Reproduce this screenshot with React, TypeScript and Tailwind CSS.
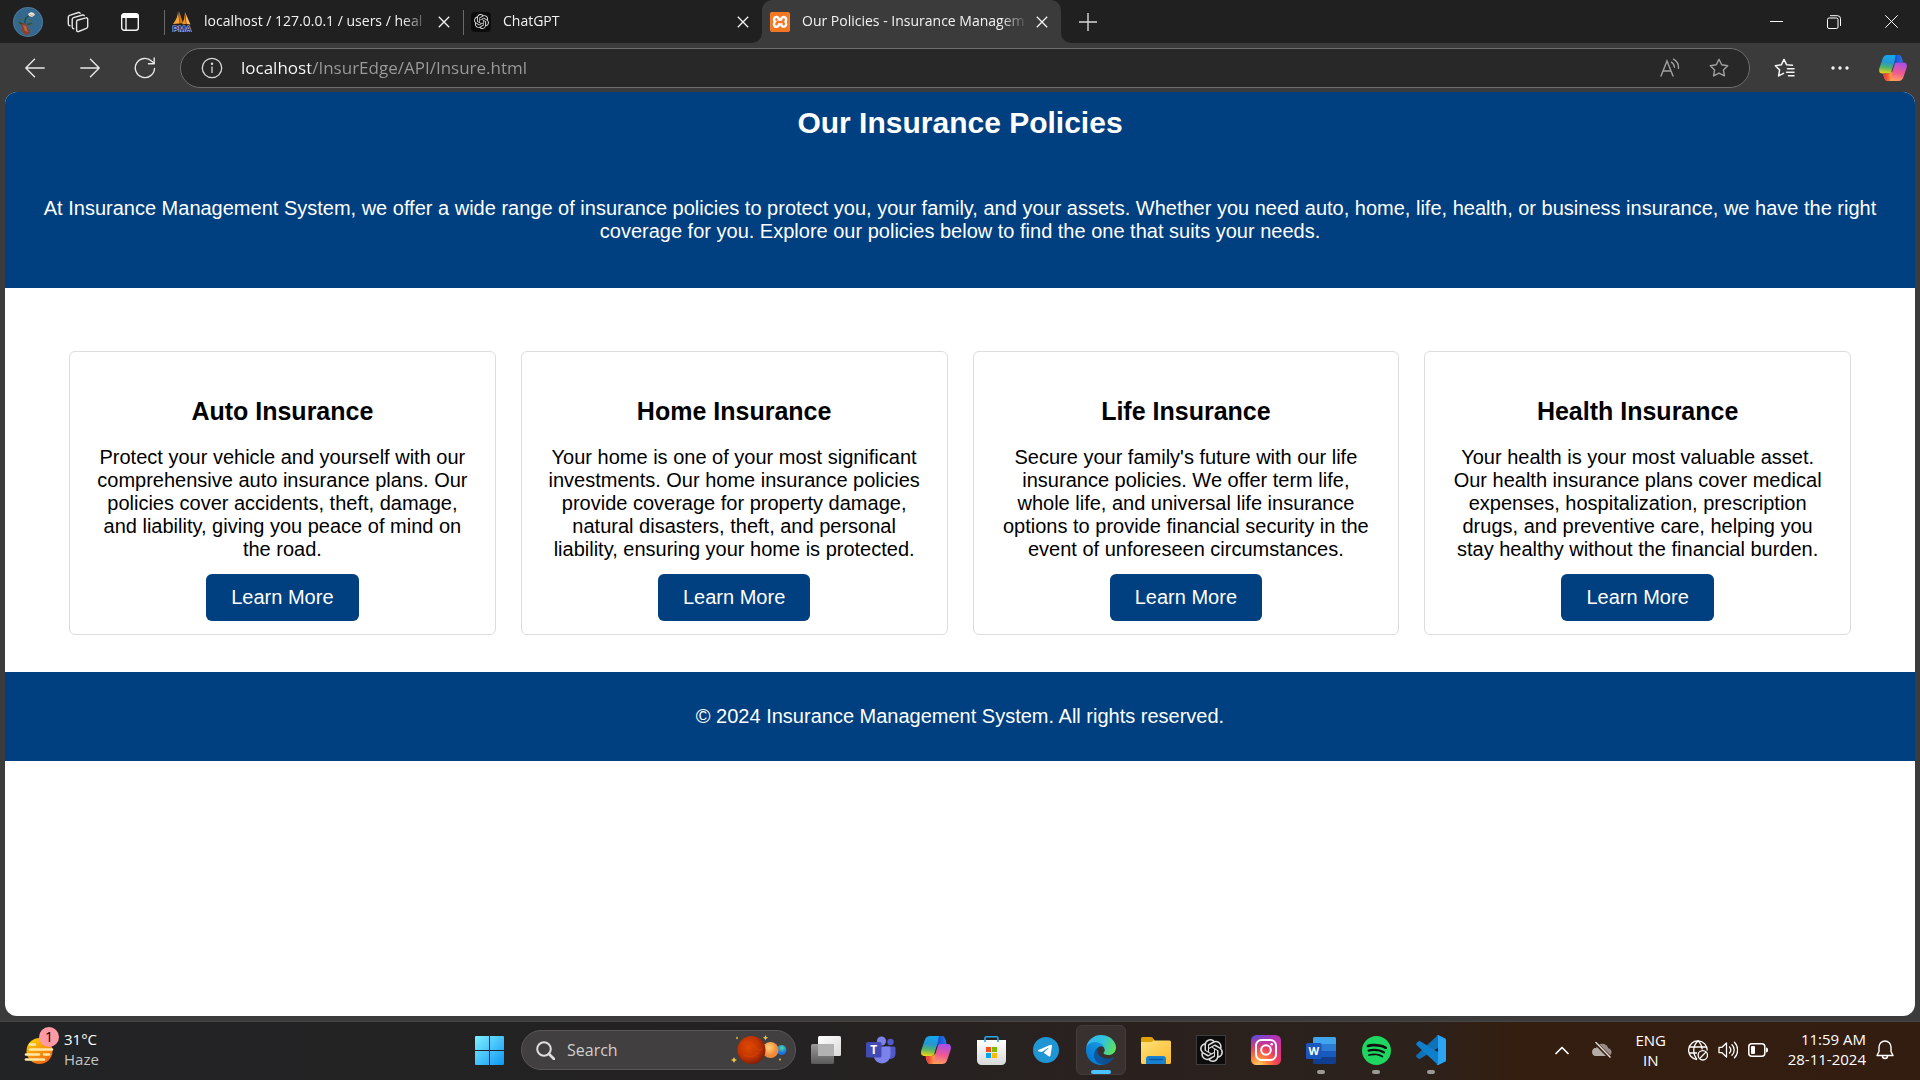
import { useId } from "react";
import type { ReactNode } from "react";
import { SiOpenai, SiSpotify, SiTelegram, SiXampp } from "react-icons/si";

const policies = [
  {
    title: "Auto Insurance",
    text: "Protect your vehicle and yourself with our comprehensive auto insurance plans. Our policies cover accidents, theft, damage, and liability, giving you peace of mind on the road.",
  },
  {
    title: "Home Insurance",
    text: "Your home is one of your most significant investments. Our home insurance policies provide coverage for property damage, natural disasters, theft, and personal liability, ensuring your home is protected.",
  },
  {
    title: "Life Insurance",
    text: "Secure your family's future with our life insurance policies. We offer term life, whole life, and universal life insurance options to provide financial security in the event of unforeseen circumstances.",
  },
  {
    title: "Health Insurance",
    text: "Your health is your most valuable asset. Our health insurance plans cover medical expenses, hospitalization, prescription drugs, and preventive care, helping you stay healthy without the financial burden.",
  },
];

function ProfileIcon() {
  return (
    <svg width="30" height="30" viewBox="0 0 30 30">
      <defs>
        <clipPath id="avatar"><circle cx="15" cy="15" r="15" /></clipPath>
      </defs>
      <g clipPath="url(#avatar)">
        <rect width="30" height="30" fill="#33688f" />
        <path d="M12 17C11 13 13 9 18 8M6 15c2 2 4 3 6 2M14 17c2 0 4 1 5-1" stroke="#27472d" strokeWidth="1.200" fill="none" />
        <path d="M4 15l3 1-2 2zM7 11l3 1-2 2zM16 13l3-1-1 3zM16 18l4-2-1 3z" fill="#4a6a3a" />
        <path d="M15 7l3-2 3 1 1 2-3 2-3-1z" fill="#e8ded2" />
        <path d="M16 7l3 1 2-1-2 2z" fill="#b9a08c" />
        <path d="M9 17l3-1 3 4 2 6-4 3-4-5z" fill="#8a4128" />
        <path d="M10 18l3 1 2 6-3-1z" fill="#b4684a" />
      </g>
      <circle cx="15" cy="15" r="14.500" fill="none" stroke="#6b8aa0" strokeOpacity=".5" />
    </svg>
  );
}

function WorkspacesIcon() {
  return (
    <svg width="22" height="22" viewBox="0 0 22 22" fill="none" stroke="#e6e6e6" strokeWidth="1.400" strokeLinejoin="round" strokeLinecap="round">
      <path d="M10.300 9.200l8.600-2.300c1-.3 1.800.3 1.800 1.300v7.300c0 .9-.5 1.500-1.300 1.800l-7.800 3.200c-1.100.4-2-.2-2-1.300v-8.300c0-.9.200-1.400.700-1.700z" />
      <path d="M6.800 17.700c-1 0-1.600-.6-1.600-1.600V8.600c0-.9.500-1.600 1.300-1.900l9-2.700c.8-.2 1.400 0 1.700.6" />
      <path d="M3 14.700c-1-.1-1.700-.7-1.700-1.700V6.100c0-.9.500-1.500 1.300-1.800l8.800-2.800c.8-.2 1.400.1 1.700.8" />
    </svg>
  );
}

function TabActionsIcon() {
  return (
    <svg width="20" height="20" viewBox="0 0 20 20" fill="none">
      <rect x="1.700" y="1.700" width="16.600" height="16.600" rx="2.500" stroke="#f2f2f2" strokeWidth="1.400" />
      <path d="M1.500 6V4a2.500 2.500 0 0 1 2.500-2.500h12A2.500 2.500 0 0 1 18.500 4v2z" fill="#fff" />
      <path d="M6 6v12" stroke="#f2f2f2" strokeWidth="1.400" />
    </svg>
  );
}

function PmaIcon() {
  return (
    <svg width="20" height="21" viewBox="0 0 20 21">
      <path d="M6 0l1.500 12.500L1 13C4 9 6 5 6 0z" fill="#f7a53a" />
      <path d="M7 0l4 12-3.500.5z" fill="#d97a10" />
      <path d="M12.500 1l1.500 12-4 .3C12 9 13 6 12.500 1z" fill="#f7931a" />
      <path d="M13 1l5.500 12.500-4-.5z" fill="#fbb75a" />
      <text x="10" y="20.500" textAnchor="middle" fontFamily="Liberation Sans, sans-serif" fontWeight="700" fontSize="8.500" fill="#2b2f7c" stroke="#b8b8dc" strokeWidth="1.200" paintOrder="stroke">PMA</text>
    </svg>
  );
}

function CloseIcon() {
  return (
    <svg width="12" height="12" viewBox="0 0 12 12" stroke="#f5f5f5" strokeWidth="1.300">
      <path d="M.8.8l10.400 10.400M11.200.8L.8 11.200" />
    </svg>
  );
}

function Arrow({ flip = false }: { flip?: boolean }) {
  return (
    <svg width="20" height="20" viewBox="0 0 20 20" fill="none" stroke="#e8e8e8" strokeWidth="1.400" strokeLinecap="round" strokeLinejoin="round">
      {flip ? <path d="M.8 10h18.400M10.500 1.300L19.200 10l-8.700 8.700" /> : <path d="M19.200 10H.8M9.500 1.300L.8 10l8.700 8.700" />}
    </svg>
  );
}

function ReloadIcon() {
  return (
    <svg width="22" height="22" viewBox="0 0 22 22" fill="none" stroke="#e8e8e8" strokeWidth="1.400" strokeLinecap="round" strokeLinejoin="round">
      <path d="M20.500 11.500a9.600 9.600 0 1 1-2.700-7.200L20 6.300" />
      <path d="M20.200 1v5.700h-5.700" />
    </svg>
  );
}

const star = "M10 1.300l2.700 5.500 6 .9-4.300 4.200 1 6L10 15.100l-5.400 2.800 1-6L1.300 7.700l6-.9z";

function CopilotIcon({ width }: { width: number }) {
  const id = useId();
  const left = "M9 0H20.500C23 0 24 2 25 5.500L25.300 7H20.500C17.500 7 16.400 8 15.500 10.800L13 18.500C12.500 20 11.500 20 9 20H3.500C0 20-.5 17 .4 14L3.800 4C4.900 1 6.500 0 9 0Z";
  return (
    <svg width={width} height={Math.round((width * 28) / 30)} viewBox="0 0 30 28">
      <defs>
        <linearGradient id={id + "a"} x1=".4" y1="0" x2=".25" y2="1">
          <stop offset="0" stopColor="#12a8ee" /><stop offset=".4" stopColor="#2597d0" /><stop offset=".68" stopColor="#55b36b" /><stop offset="1" stopColor="#f3d612" />
        </linearGradient>
        <linearGradient id={id + "b"} x1=".4" y1="1" x2=".65" y2="0">
          <stop offset="0" stopColor="#a94fe8" /><stop offset=".5" stopColor="#ee5791" /><stop offset="1" stopColor="#ffa35b" />
        </linearGradient>
        <linearGradient id={id + "c"}><stop offset="0" stopColor="#1b48c8" /><stop offset="1" stopColor="#2575f0" /></linearGradient>
        <linearGradient id={id + "d"}><stop offset="0" stopColor="#ffb03c" /><stop offset=".7" stopColor="#f0463c" /></linearGradient>
      </defs>
      <path d={left} fill={`url(#${id}a)`} />
      <path d="M18 0h2.500C23 0 24 2 25 5.500l.4 2.500H20.500C17.500 8 16.500 9 15.700 11L17 4.500C17.500 2 17.500 1 18 0Z" fill={`url(#${id}c)`} />
      <g transform="rotate(180 15 14)">
        <path d={left} fill={`url(#${id}b)`} />
        <path d="M18 0h2.500C23 0 24 2 25 5.500l.4 2.500H20.500C17.500 8 16.500 9 15.700 11L17 4.500C17.500 2 17.500 1 18 0Z" fill={`url(#${id}d)`} />
      </g>
    </svg>
  );
}

function TitleTab({ icon, title, divider }: { icon: ReactNode; title: string; divider: boolean }) {
  return (
    <div className="relative flex h-full w-[299px] items-center">
      {divider && <span className="absolute left-0 top-[10px] h-[25px] w-px bg-[#6a6a6a]" />}
      <button className="flex min-w-0 flex-1 items-center gap-3 pl-2 text-left">
        <span className="flex w-5 shrink-0 justify-center">{icon}</span>
        <span className="flex-1 whitespace-nowrap pb-0.5 [mask-image:linear-gradient(90deg,#000_88%,transparent)]">{title}</span>
      </button>
      <button aria-label={`Close ${title}`} className="mr-[13px] ml-2 flex w-3 justify-center"><CloseIcon /></button>
    </div>
  );
}

function GptBadge({ size }: { size: "sm" | "lg" }) {
  return size === "sm" ? (
    <span className="flex size-5 items-center justify-center rounded bg-[#0c0c0c] text-[#d5d5d5]"><SiOpenai size={15} /></span>
  ) : (
    <span className="flex size-[30px] items-center justify-center border border-[#3c3c3c] bg-[#0c0c0c] text-[#dedede]"><SiOpenai size={23} /></span>
  );
}

function BrowserTop() {
  return (
    <header className="text-sm leading-6 text-[#f2f2f2]">
      <div className="flex h-[43px] items-center bg-[#202020]">
        <button aria-label="Profile" className="ml-[13px]"><ProfileIcon /></button>
        <button aria-label="Workspaces" className="ml-6"><WorkspacesIcon /></button>
        <button aria-label="Tab actions" className="ml-[31px]"><TabActionsIcon /></button>
        <nav aria-label="Open tabs" className="ml-6 flex h-full">
          <TitleTab icon={<PmaIcon />} title="localhost / 127.0.0.1 / users / heal" divider />
          <TitleTab icon={<GptBadge size="sm" />} title="ChatGPT" divider />
          <div className="relative h-full rounded-t-[10px] bg-[#3b3b3b]">
            <span className="absolute bottom-0 -left-[10px] size-[10px] overflow-hidden bg-[#3b3b3b]"><span className="block size-full rounded-br-[10px] bg-[#202020]" /></span>
            <span className="absolute -right-[10px] bottom-0 size-[10px] overflow-hidden bg-[#3b3b3b]"><span className="block size-full rounded-bl-[10px] bg-[#202020]" /></span>
            <TitleTab
              icon={<span className="flex rounded-sm bg-white text-[#f37623]"><SiXampp size={20} /></span>}
              title="Our Policies - Insurance Managem"
              divider={false}
            />
          </div>
        </nav>
        <button aria-label="New tab" className="ml-[18px]">
          <svg width="18" height="18" viewBox="0 0 18 18" stroke="#d8d8d8" strokeWidth="1.400"><path d="M9 0v18M0 9h18" /></svg>
        </button>
        <div className="mr-[22px] ml-auto flex items-center gap-11">
          <button aria-label="Minimize"><svg width="13" height="13" viewBox="0 0 13 13" stroke="#fff"><path d="M0 6.500h13" /></svg></button>
          <button aria-label="Restore">
            <svg width="14" height="14" viewBox="0 0 14 14" fill="none" stroke="#fff"><rect x=".5" y="3" width="10.500" height="10.500" rx="1.500" /><path d="M3 .7h7.500a3 3 0 0 1 3 3V11" /></svg>
          </button>
          <button aria-label="Close window"><svg width="13" height="13" viewBox="0 0 13 13" stroke="#fff"><path d="M.3.3l12.400 12.400M12.700.3L.3 12.700" /></svg></button>
        </div>
      </div>
      <div className="flex h-[49px] items-center bg-[#3b3b3b] pr-[13px] pl-[25px]">
        <button aria-label="Back"><Arrow /></button>
        <button aria-label="Forward" className="ml-[35px]"><Arrow flip /></button>
        <button aria-label="Reload" className="ml-[34px]"><ReloadIcon /></button>
        <div className="ml-6 flex h-10 flex-1 items-center rounded-full border border-[#6e6e6e] bg-[#282828] px-5">
          <button aria-label="Site information">
            <svg width="22" height="22" viewBox="0 0 22 22" fill="none" stroke="#d8d8d8" strokeWidth="1.300"><circle cx="11" cy="11" r="9.700" /><path d="M11 9.500v6.500" /><circle cx="11" cy="6.800" r=".6" fill="#d8d8d8" /></svg>
          </button>
          <input
            aria-label="Address"
            defaultValue="localhost/InsurEdge/API/Insure.html"
            className="ml-[18px] min-w-0 flex-1 bg-[linear-gradient(90deg,#fff_0_69px,#9b9b9b_69px)] bg-clip-text text-[17px] text-transparent outline-none"
          />
          <button aria-label="Read aloud">
            <svg width="20" height="20" viewBox="0 0 20 20" fill="none" stroke="#a0a0a0" strokeWidth="1.400" strokeLinecap="round"><path d="M1 18L7 3l6 15M3 13h8M11.500 4.200a7 7 0 0 1 3 5M13.500 1.200a10 10 0 0 1 5 9" /></svg>
          </button>
          <button aria-label="Add to favorites" className="ml-[29px]">
            <svg width="20" height="20" viewBox="0 0 20 20" fill="none" stroke="#a0a0a0" strokeWidth="1.400" strokeLinejoin="round"><path d={star} /></svg>
          </button>
        </div>
        <button aria-label="Favorites" className="ml-6">
          <svg width="21" height="20" viewBox="0 0 21 20" fill="none" stroke="#f4f4f4" strokeWidth="1.500" strokeLinejoin="round" strokeLinecap="round"><path d="M18.500 7.200l-5.800-.4L10 1.300 7.300 6.800l-6 .9 4.300 4.200-1 6 4.900-2.500" /><path d="M13.500 10.700h6.500M12.500 14.200h7.500M14.500 17.700h5.500" /></svg>
        </button>
        <button aria-label="Settings and more" className="ml-9">
          <svg width="18" height="4" viewBox="0 0 18 4" fill="#f4f4f4"><circle cx="2" cy="2" r="1.700" /><circle cx="9" cy="2" r="1.700" /><circle cx="16" cy="2" r="1.700" /></svg>
        </button>
        <button aria-label="Copilot" className="ml-[30px]"><CopilotIcon width={28} /></button>
      </div>
    </header>
  );
}

function InsurancePage() {
  return (
    <main className="mx-[5px] mb-[5px] flex-1 overflow-hidden rounded-xl bg-white font-['Liberation_Sans',Arial,sans-serif] text-xl leading-[23px] text-black">
      <section className="bg-[#004080] px-9 pt-[13px] pb-[45px] text-center text-white">
        <h1 className="text-[30px] leading-[35px] font-bold">Our Insurance Policies</h1>
        <p className="mt-[57px]">
          At Insurance Management System, we offer a wide range of insurance policies to protect you, your family, and your assets. Whether you need auto, home, life, health, or business insurance, we have the right coverage for you. Explore our policies below to find the one that suits your needs.
        </p>
      </section>
      <section className="grid grid-cols-4 gap-[25px] px-16 pt-[63px] pb-[37px]">
        {policies.map((p) => (
          <article key={p.title} className="flex flex-col items-center rounded-md border border-[#dddddd] px-6 pt-[45px] pb-[13px] text-center">
            <h2 className="text-[25px] leading-[29px] font-bold">{p.title}</h2>
            <p className="mt-5">{p.text}</p>
            <a href="#" className="mt-[13px] rounded-md bg-[#004080] px-[25px] py-3 text-white">Learn More</a>
          </article>
        ))}
      </section>
      <footer className="bg-[#004080] py-[33px] text-center text-white">© 2024 Insurance Management System. All rights reserved.</footer>
    </main>
  );
}

function WeatherIcon() {
  return (
    <svg width="30" height="30" viewBox="0 0 30 30">
      <defs><linearGradient id="sun" x1="0" y1="0" x2=".6" y2="1"><stop offset="0" stopColor="#ffd500" /><stop offset="1" stopColor="#f06a10" /></linearGradient></defs>
      <circle cx="15.500" cy="16" r="13" fill="url(#sun)" />
      <g stroke="#ffe9a8" strokeWidth="2.600" strokeLinecap="round">
        <path d="M6 9.500h5M6 14.500h22" /><path d="M2 19.500h13M20 19.500h5" /><path d="M2 24.500h18" />
      </g>
    </svg>
  );
}

function StartIcon() {
  return (
    <svg width="29" height="29" viewBox="0 0 29 29">
      <defs><linearGradient id="win" gradientUnits="userSpaceOnUse" x1="0" y1="0" x2="29" y2="29"><stop offset="0" stopColor="#7df0ff" /><stop offset="1" stopColor="#0f96f5" /></linearGradient></defs>
      <path d="M1 0h13v14H0V1a1 1 0 0 1 1-1zM15 0h13a1 1 0 0 1 1 1v13H15zM0 15h14v14H1a1 1 0 0 1-1-1zM15 15h14v13a1 1 0 0 1-1 1H15z" fill="url(#win)" />
    </svg>
  );
}

function PlanetsIcon() {
  return (
    <svg width="56" height="30" viewBox="0 0 56 30">
      <defs>
        <radialGradient id="mars" cx=".4" cy=".4" r=".65"><stop offset="0" stopColor="#e04800" /><stop offset=".6" stopColor="#c03402" /><stop offset="1" stopColor="#7c1b08" /></radialGradient>
        <radialGradient id="venus" cx=".4" cy=".35"><stop offset="0" stopColor="#ffd27a" /><stop offset="1" stopColor="#f08a38" /></radialGradient>
        <radialGradient id="earth" cx=".55" cy=".3"><stop offset="0" stopColor="#4be0a0" /><stop offset="1" stopColor="#1a70e0" /></radialGradient>
      </defs>
      <circle cx="50.500" cy="15" r="5" fill="url(#earth)" />
      <circle cx="39.500" cy="15" r="8" fill="url(#venus)" />
      <circle cx="20.500" cy="15" r="14" fill="url(#mars)" />
      <path d="M10 10q8-6 13 1t9 2M13 20q8 4 15-3" stroke="#e8500a" strokeOpacity=".3" fill="none" strokeWidth="1.500" />
      <g fill="#f2c545"><path d="M3 22l1 2 2 1-2 1-1 2-1-2-2-1 2-1zM34.500 0l.8 2 2 .8-2 .8-.8 2-.8-2-2-.8 2-.8z" /><path d="M6 1.500l1 1.500-1 1.500L5 3zM49 23l1 1.500-1 1.500-1-1.500z" /></g>
    </svg>
  );
}

function TaskViewIcon() {
  return (
    <svg width="30" height="28" viewBox="0 0 30 28">
      <defs>
        <linearGradient id="tv1" x2=".8" y2="1"><stop offset="0" stopColor="#fff" /><stop offset="1" stopColor="#dcdcdc" /></linearGradient>
        <linearGradient id="tv2" y2="1" x2="0"><stop offset="0" stopColor="#9a9a9a" /><stop offset="1" stopColor="#5a5a5a" /></linearGradient>
      </defs>
      <rect x="0" y="8" width="23" height="20" rx="1.500" fill="url(#tv2)" />
      <rect x="7" y="0" width="23" height="20" rx="1.500" fill="url(#tv1)" />
      <path d="M7 8h16v12H8.500A1.500 1.500 0 0 1 7 18.500z" fill="#b2b2b2" />
    </svg>
  );
}

function TeamsIcon() {
  return (
    <svg width="30" height="28" viewBox="0 0 30 28">
      <circle cx="24.500" cy="6" r="3.200" fill="#5059c9" />
      <path d="M19 10.500h9a1.500 1.500 0 0 1 1.500 1.500v6a5 5 0 0 1-10 0z" fill="#5059c9" />
      <circle cx="15.500" cy="5" r="4.600" fill="#7b83eb" />
      <path d="M9 10.500h14a1.500 1.500 0 0 1 1.500 1.500v7a8.500 8.500 0 0 1-17 0v-7A1.500 1.500 0 0 1 9 10.500z" fill="#7b83eb" />
      <rect x="0" y="6" width="15.500" height="15.500" rx="1.500" fill="#444ab4" />
      <text x="7.700" y="18" textAnchor="middle" fontFamily="Open Sans, sans-serif" fontWeight="700" fontSize="12" fill="#fff">T</text>
    </svg>
  );
}

function StoreIcon() {
  return (
    <svg width="29" height="29" viewBox="0 0 29 29">
      <defs><linearGradient id="bag" x2="0" y2="1"><stop offset="0" stopColor="#fff" /><stop offset="1" stopColor="#d9d9d9" /></linearGradient></defs>
      <path d="M0 4h29v20.500a4.500 4.500 0 0 1-4.500 4.500h-20A4.500 4.500 0 0 1 0 24.500z" fill="url(#bag)" />
      <path d="M8 6V2.200C8 1.300 8.600.8 9.400.8h10.200c.8 0 1.400.5 1.400 1.400V6" fill="none" stroke="#28a8ea" strokeWidth="1.600" />
      <path d="M9 11h5v5H9z" fill="#f25022" /><path d="M15 11h5v5h-5z" fill="#7fba00" /><path d="M9 17h5v5H9z" fill="#00a4ef" /><path d="M15 17h5v5h-5z" fill="#ffb900" />
    </svg>
  );
}

function EdgeIcon() {
  return (
    <svg width="30" height="30" viewBox="0 0 256 256">
      <defs>
        <linearGradient id="e1" x1="0" x2="1"><stop offset="0" stopColor="#0c59a4" /><stop offset="1" stopColor="#114a8b" /></linearGradient>
        <linearGradient id="e2" x1=".8" y1="0" x2=".2" y2="1"><stop offset="0" stopColor="#1b9de2" /><stop offset=".5" stopColor="#0b86da" /><stop offset="1" stopColor="#0078d4" /></linearGradient>
        <linearGradient id="e3" x1="0" y1=".3" x2="1" y2=".6"><stop offset="0" stopColor="#35b4f1" /><stop offset=".5" stopColor="#2fc2df" /><stop offset="1" stopColor="#5fe05a" /></linearGradient>
      </defs>
      <path fill="url(#e1)" d="M231 190.500c-3.400 1.800-6.900 3.400-10.500 4.700a101.200 101.200 0 0 1-35.900 6.500c-47.300 0-88.500-32.500-88.500-74.300.1-11.400 6.400-21.900 16.400-27.300-42.800 1.800-53.800 46.400-53.800 72.500 0 73.900 68.100 81.400 82.800 81.400 7.900 0 19.800-2.300 27-4.600l1.300-.4a128.300 128.300 0 0 0 66.600-52.800 4 4 0 0 0-5.400-5.700z" />
      <path fill="url(#e2)" d="M105.700 241.500a79.200 79.200 0 0 1-22.700-21.300 80.700 80.700 0 0 1 29.500-120c3.200-1.500 8.500-4.100 15.600-4a32.400 32.400 0 0 1 25.700 13 31.900 31.900 0 0 1 6.300 18.700c0-.2 24.500-79.600-80-79.600-43.900 0-80 41.700-80 78.200a130.200 130.200 0 0 0 12.100 56 128 128 0 0 0 156.400 67.100 75.500 75.500 0 0 1-62.900-8.100z" />
      <path fill="url(#e3)" d="M152.300 148.900c-.8 1-3.300 2.500-3.300 5.700 0 2.600 1.700 5.200 4.800 7.300 14.400 10.100 41.700 8.700 41.800 8.700a59.800 59.800 0 0 0 30.300-8.400 61.400 61.400 0 0 0 30.400-52.900c.3-22.400-8-37.300-11.300-43.900C223.500 23.900 177.700 0 128 0A128 128 0 0 0 0 126.200c.5-36.500 36.800-66 80-66 3.500 0 23.500.3 42 10.100 16.300 8.600 24.900 19 30.800 29.300 6.200 10.700 7.300 24.100 7.300 29.500s-2.700 13.300-7.800 19.800z" />
    </svg>
  );
}

function ExplorerIcon() {
  return (
    <svg width="30" height="27" viewBox="0 0 30 27">
      <defs><linearGradient id="fold" x2="1" y2="1"><stop offset="0" stopColor="#ffe27a" /><stop offset="1" stopColor="#fcb92c" /></linearGradient></defs>
      <path d="M0 1.500A1.500 1.500 0 0 1 1.500 0h8.300c1 0 1.700.4 2.300 1.200L14 4v6H0z" fill="#e0a008" />
      <path d="M0 5h10.500l2-1.500H28.500A1.500 1.500 0 0 1 30 5v20.500a1.500 1.500 0 0 1-1.500 1.500h-27A1.500 1.500 0 0 1 0 25.500z" fill="url(#fold)" />
      <path d="M5 27v-5a3 3 0 0 1 3-3h14a3 3 0 0 1 3 3v5z" fill="#1a80d0" />
      <path d="M9 22.500h12" stroke="#0c5aa6" strokeWidth="1.600" strokeLinecap="round" />
    </svg>
  );
}

function InstagramIcon() {
  return (
    <svg width="30" height="30" viewBox="0 0 30 30">
      <defs>
        <linearGradient id="ig1" x1=".1" y1="0" x2=".9" y2="1"><stop offset="0" stopColor="#5a4fd8" /><stop offset=".4" stopColor="#b931b3" /><stop offset="1" stopColor="#e8336b" /></linearGradient>
        <radialGradient id="ig2" cx=".25" cy="1.050" r="1"><stop offset="0" stopColor="#ffdc6a" /><stop offset=".3" stopColor="#fd8a3c" /><stop offset=".65" stopColor="#f2434f" stopOpacity=".8" /><stop offset="1" stopColor="#d0309a" stopOpacity="0" /></radialGradient>
      </defs>
      <rect width="30" height="30" rx="5.500" fill="url(#ig1)" /><rect width="30" height="30" rx="5.500" fill="url(#ig2)" />
      <g fill="none" stroke="#fff" strokeWidth="2"><rect x="5" y="5" width="20" height="20" rx="5.500" /><circle cx="15" cy="15" r="4.800" /></g>
      <circle cx="20.700" cy="9.300" r="1.300" fill="#fff" />
    </svg>
  );
}

function WordIcon() {
  return (
    <svg width="30" height="27" viewBox="0 0 30 27">
      <path d="M7 1.500A1.500 1.500 0 0 1 8.500 0h20A1.500 1.500 0 0 1 30 1.500V7H7z" fill="#41a5ee" />
      <path d="M7 7h23v7H7z" fill="#2b7cd3" /><path d="M7 14h23v6.500H7z" fill="#185abd" />
      <path d="M7 20.500h23v5a1.500 1.500 0 0 1-1.500 1.500h-20A1.500 1.500 0 0 1 7 25.500z" fill="#103f91" />
      <rect x="0" y="6" width="15.500" height="16" rx="1.500" fill="#1a56bd" />
      <text x="7.700" y="18" textAnchor="middle" fontFamily="Open Sans, sans-serif" fontWeight="700" fontSize="11" fill="#fff">W</text>
    </svg>
  );
}

function CodeIcon() {
  return (
    <svg width="30" height="30" viewBox="0 0 30 30">
      <path d="M22 0l7 3.200c.7.300 1 .9 1 1.600V8L4.200 23.700c-.5.400-1.100.3-1.600 0L.6 21.900c-.6-.5-.6-1.300 0-1.900z" fill="#1070b8" />
      <path d="M.6 10c-.6-.5-.6-1.300 0-1.900l2-1.800c.5-.3 1.100-.4 1.600 0L30 22v3.200c0 .7-.3 1.300-1 1.600L22 30z" fill="#0f7fcb" />
      <path d="M22 30c-.8.200-1.400 0-1.900-.6.700.700 1.900.200 1.900-.800V1.400c0-1-1.200-1.500-1.900-.8C20.600 0 21.300-.2 22 .100l7 3.300c.6.300 1 .9 1 1.600v20c0 .7-.4 1.300-1 1.600z" fill="#2ba5f2" />
    </svg>
  );
}

function AppButton({ label, children, active = false, running = false }: { label: string; children: ReactNode; active?: boolean; running?: boolean }) {
  return (
    <button
      aria-label={label}
      className={
        active
          ? "relative flex size-[50px] items-center justify-center rounded-md border border-[#433c3a] bg-[#38312f]"
          : "relative flex size-[50px] items-center justify-center"
      }
    >
      {children}
      {active && <span className="absolute bottom-0 h-1 w-5 rounded-full bg-[#4cc2ff]" />}
      {running && <span className="absolute bottom-px h-1 w-2 rounded-full bg-[#9d9996]" />}
    </button>
  );
}

function Taskbar() {
  return (
    <footer className="grid h-[59px] grid-cols-[1fr_auto_1fr] items-center border-t border-[#484644] bg-[linear-gradient(90deg,#222325_0%,#242222_42%,#2a211e_60%,#2c211b_74%,#341e10_79%,#321d10_100%)] pb-0.5 text-[15px] leading-5 text-white">
      <button className="ml-6 flex items-center justify-self-start text-left">
        <span className="relative">
          <WeatherIcon />
          <span className="absolute -top-2 left-[15px] flex size-5 items-center justify-center rounded-full bg-[#ff99a4] text-[14px] text-black">1</span>
        </span>
        <span className="ml-[10px] flex flex-col pb-0.5"><span>31°C</span><span className="text-[#c4c4c4]">Haze</span></span>
      </button>
      <div className="flex items-center gap-[5px]">
        <AppButton label="Start"><StartIcon /></AppButton>
        <label className="ml-0.5 flex h-10 w-[275px] items-center rounded-full border border-[#5a5758] bg-[#413f40] pr-2 pl-[14px]">
          <svg width="19" height="19" viewBox="0 0 19 19" fill="none" stroke="#dedede" strokeWidth="2" strokeLinecap="round"><circle cx="8" cy="8" r="6.800" /><path d="M13 13l5 5" strokeWidth="2.600" /></svg>
          <input aria-label="Search" placeholder="Search" className="ml-3 min-w-0 flex-1 bg-transparent text-base outline-none placeholder:text-[#cfcfcf]" />
          <PlanetsIcon />
        </label>
        <AppButton label="Task view"><TaskViewIcon /></AppButton>
        <AppButton label="Microsoft Teams"><TeamsIcon /></AppButton>
        <AppButton label="Copilot"><CopilotIcon width={30} /></AppButton>
        <AppButton label="Microsoft Store"><StoreIcon /></AppButton>
        <AppButton label="Telegram"><span className="rounded-full bg-[radial-gradient(circle,#fff_60%,transparent_61%)] text-[#1f95d4]"><SiTelegram size={26} /></span></AppButton>
        <AppButton label="Microsoft Edge" active><EdgeIcon /></AppButton>
        <AppButton label="File Explorer"><ExplorerIcon /></AppButton>
        <AppButton label="ChatGPT"><GptBadge size="lg" /></AppButton>
        <AppButton label="Instagram"><InstagramIcon /></AppButton>
        <AppButton label="Word" running><WordIcon /></AppButton>
        <AppButton label="Spotify" running><span className="rounded-full bg-[radial-gradient(circle,#101010_60%,transparent_61%)] text-[#1ed760]"><SiSpotify size={29} /></span></AppButton>
        <AppButton label="Visual Studio Code" running><CodeIcon /></AppButton>
      </div>
      <div className="mr-[26px] flex items-center justify-self-end">
        <button aria-label="Show hidden icons"><svg width="14" height="9" viewBox="0 0 14 9" fill="none" stroke="#fff" strokeWidth="1.700" strokeLinecap="round" strokeLinejoin="round"><path d="M1 7.500l6-6 6 6" /></svg></button>
        <button aria-label="OneDrive" className="ml-[23px]">
          <svg width="21" height="16" viewBox="0 0 21 16"><path d="M4.500 14A4 4 0 0 1 4 6a6.500 6.500 0 0 1 12.300.2A4 4 0 0 1 16.500 14z" fill="#988c86" /><path d="M4 6a6 6 0 0 1 5 1l8 7H4.500A4 4 0 0 1 4 6z" fill="#b5aca7" /><path d="M3 .5l15 15" stroke="#341e10" strokeWidth="3.500" /><path d="M3.500 0l15 15.500" stroke="#e6e0dc" strokeWidth="1.400" /></svg>
        </button>
        <button className="ml-[21px] flex w-[34px] flex-col items-center"><span>ENG</span><span>IN</span></button>
        <button aria-label="Network, volume and battery" className="ml-5 flex items-center gap-[10px]">
          <svg width="20" height="21" viewBox="0 0 20 21" fill="none" stroke="#fff" strokeWidth="1.300"><path d="M9 19.500a9.300 9.300 0 1 1 10.200-9M1 7h18M1 13h8" /><path d="M10 .8C4.500 6 4.500 14 9 19.300M10 .8c2.600 2.500 4 5.500 4.200 8.700" /><circle cx="14.800" cy="15.300" r="4.700" /><path d="M11.700 18.500l6.200-6.400" /></svg>
          <svg width="20" height="18" viewBox="0 0 20 18" fill="none" stroke="#fff" strokeWidth="1.300" strokeLinecap="round" strokeLinejoin="round"><path d="M1 6.300h3L8.500 2v14L4 11.700H1zM11.500 6a4.500 4.500 0 0 1 0 6M14 3.700a7.500 7.500 0 0 1 0 10.600M16.500 1.300a11 11 0 0 1 0 15.400" /></svg>
          <svg width="20" height="14" viewBox="0 0 20 14" fill="none"><rect x=".8" y=".8" width="16" height="12.400" rx="3" stroke="#fff" strokeWidth="1.500" /><rect x="3" y="3" width="4" height="8" rx="1" fill="#fff" /><path d="M18 4.500c1.300 0 2 .8 2 2.500s-.7 2.500-2 2.500z" fill="#fff" /></svg>
        </button>
        <button className="ml-5 flex flex-col items-end pb-0.5"><span>11:59 AM</span><span>28-11-2024</span></button>
        <button aria-label="Notifications" className="ml-[10px]">
          <svg width="18" height="20" viewBox="0 0 18 20" fill="none" stroke="#fff" strokeWidth="1.400" strokeLinejoin="round"><path d="M9 1a6 6 0 0 1 6 6v4.500L17 15.500H1l2-4V7a6 6 0 0 1 6-6zM6.500 16a2.500 2.500 0 0 0 5 0" /></svg>
        </button>
      </div>
    </footer>
  );
}

export default function App() {
  return (
    <div className="flex min-h-screen flex-col bg-[#3b3b3b] font-['Open_Sans','Noto_Sans',sans-serif]">
      <BrowserTop />
      <InsurancePage />
      <Taskbar />
    </div>
  );
}
